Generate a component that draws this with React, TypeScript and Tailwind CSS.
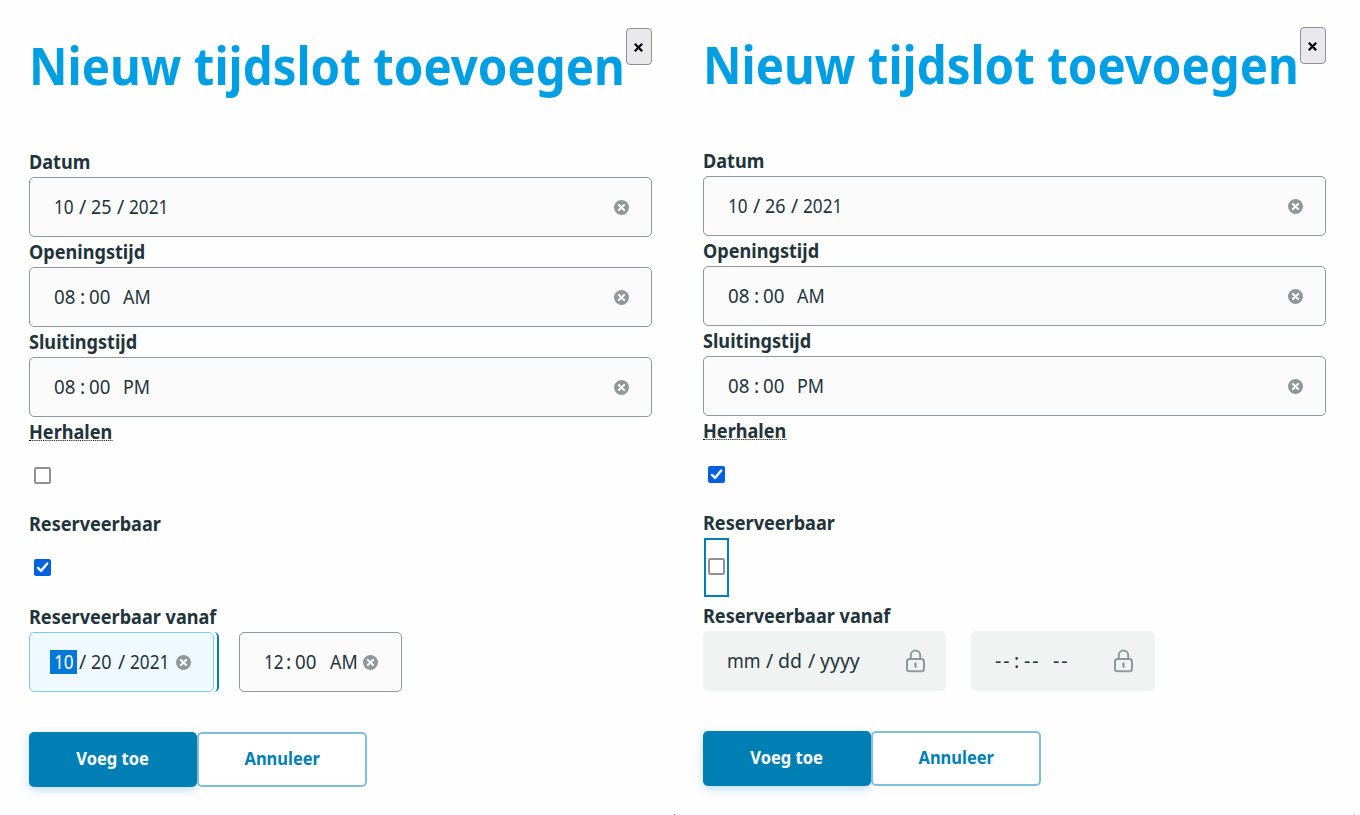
import React from "react";

type Segment = [text: string, width: string, shape?: string];

const NARROW = "inline-block origin-left scale-x-[0.88]";
const SLIM = "inline-block origin-left scale-x-[0.92]";
const EASED = "inline-block origin-left scale-x-[0.96]";

function ClearIcon() {
  return (
    <svg width="15" height="15" viewBox="0 0 15 15" className="shrink-0">
      <circle cx="7.5" cy="7.5" r="7.5" fill="#90989b" />
      <path d="M4.9 4.9l5.2 5.2M10.1 4.9l-5.2 5.2" stroke="#fbfbfb" strokeWidth="2.1" strokeLinecap="round" />
    </svg>
  );
}

function LockIcon() {
  return (
    <svg width="20" height="24" viewBox="0 0 20 24" fill="none" stroke="#90989b" strokeWidth="2" className="shrink-0">
      <rect x="1" y="10" width="17" height="12.3" rx="2.5" />
      <path d="M4.8 10V6.2a4.7 4.7 0 0 1 9.4 0V10" />
      <path d="M9.5 14.6v3" strokeWidth="2.4" strokeLinecap="round" />
    </svg>
  );
}

function Segments({ items }: { items: Segment[] }) {
  return (
    <div className="flex shrink-0 text-[19.5px] leading-6 whitespace-pre">
      {items.map(([text, width, shape], i) => (
        <span key={i} className={width}>
          <span className={shape}>{text}</span>
        </span>
      ))}
    </div>
  );
}

function Label({ dotted = false, children }: { dotted?: boolean; children: React.ReactNode }) {
  return (
    <div className="flex h-[30px] origin-left scale-x-[0.928] items-center text-[19.5px] leading-[18px] font-bold whitespace-nowrap">
      <span className={dotted ? "h-[18px] border-b border-dotted border-black" : "h-[18px]"}>{children}</span>
    </div>
  );
}

function Field({ items }: { items: Segment[] }) {
  return (
    <div className="flex h-[60px] items-center justify-between rounded-[5px] border border-[#90989b] bg-[#fbfbfb] pr-[22px] pl-6">
      <Segments items={items} />
      <ClearIcon />
    </div>
  );
}

function CheckRow({ checked, focused = false }: { checked: boolean; focused?: boolean }) {
  return (
    <div className="pl-px">
      <div
        className={
          focused
            ? "flex h-[59px] w-[25px] items-center justify-center border-2 border-[#007fb5] pb-0.5"
            : "flex h-[59px] w-[25px] items-center justify-center pb-0.5"
        }
      >
        {checked ? (
          <svg width="17" height="17" viewBox="0 0 17 17">
            <rect width="17" height="17" rx="2" fill="#0060df" />
            <path d="M4 8.9l3 3 6.2-7.4" fill="none" stroke="#fff" strokeWidth="2.4" strokeLinecap="round" strokeLinejoin="round" />
          </svg>
        ) : (
          <svg width="17" height="17" viewBox="0 0 17 17">
            <rect x="1" y="1" width="15" height="15" rx="1.2" fill="#fff" stroke="#8f8f9d" strokeWidth="2" />
          </svg>
        )}
      </div>
    </div>
  );
}

const dateSegments = (day: string): Segment[] => [
  ["10", "w-[25px]", NARROW],
  ["/", "w-3"],
  [day, "w-[26px]", SLIM],
  ["/", "w-3"],
  ["2021", "w-10", NARROW],
];

const timeSegments = (hour: string, half: string): Segment[] => [
  [hour, "w-[26px]", EASED],
  [":", "w-[9px]"],
  ["00", "w-[34px]", EASED],
  [half, "w-[27px]", SLIM],
];

function ActiveFrom() {
  return (
    <div className="flex gap-5">
      <div className="h-[60px] w-[190px] rounded-r-[5px] border-r-2 border-[#007fb5] pr-[3px]">
        <div className="flex h-[60px] items-center rounded-[5px] border border-[#80ccf0] bg-[#f0f9ff] pl-5">
          <div className="w-[27px] shrink-0 bg-[#0078d7] pl-1 text-white">
            <Segments items={[["10", "w-[23px]", NARROW]]} />
          </div>
          <Segments items={[[" ", "w-[2px]"], ["/", "w-3"], ["20", "w-[27px]", SLIM], ["/", "w-3"], ["2021", "w-[46px]", NARROW]]} />
          <ClearIcon />
        </div>
      </div>
      <div className="flex h-[60px] w-[163px] items-center rounded-[5px] border border-[#90989b] bg-[#fbfbfb] pl-6">
        <Segments items={[["12", "w-[22px]", NARROW], [":", "w-[9px]"], ["00", "w-[35px]", EASED], ["AM", "w-[33px]", SLIM]]} />
        <ClearIcon />
      </div>
    </div>
  );
}

function DisabledFrom() {
  return (
    <div className="flex gap-[25px]">
      <div className="flex h-[60px] w-[243px] items-center justify-between rounded-[5px] bg-[#f1f3f3] pr-5 pl-6">
        <Segments items={[["mm", "w-[39px]", SLIM], ["/", "w-3"], ["dd", "w-[30px]"], ["/", "w-3"], ["yyyy", "w-10"]]} />
        <LockIcon />
      </div>
      <div className="flex h-[60px] w-[184px] items-center justify-between rounded-[5px] bg-[#f1f3f3] pr-[21px] pl-6">
        <Segments
          items={[
            ["--", "w-[19px]", "tracking-[2px]"],
            [":", "w-[10px]"],
            ["--", "w-[29px]", "tracking-[2px]"],
            ["--", "w-4", "tracking-[2px]"],
          ]}
        />
        <LockIcon />
      </div>
    </div>
  );
}

function SlotDialog({ day, repeat }: { day: string; repeat: boolean }) {
  return (
    <section className="w-[623px] shrink-0 text-[#22333b]">
      <header className="flex h-[119px] items-start justify-between">
        <h1 className="w-[597px] shrink-0 origin-left scale-x-[0.912] pt-0.5 text-[52px] leading-[70px] font-bold whitespace-nowrap text-[#009ee3]">
          Nieuw tijdslot toevoegen
        </h1>
        <button className="flex h-[37px] w-[26px] shrink-0 items-center justify-center rounded-[4px] border border-[#8f8f9d] bg-[#e9e9ed] pr-px">
          <svg width="9" height="9" viewBox="0 0 9 9" stroke="#000" strokeWidth="2.2" className="mt-0.5">
            <path d="M.8.8l7.4 7.4M8.2.8L.8 8.2" />
          </svg>
        </button>
      </header>
      <Label>Datum</Label>
      <Field items={dateSegments(day)} />
      <Label>Openingstijd</Label>
      <Field items={timeSegments("08", "AM")} />
      <Label>Sluitingstijd</Label>
      <Field items={timeSegments("08", "PM")} />
      <Label dotted>Herhalen</Label>
      <div className="pb-[3px]">
        <CheckRow checked={repeat} />
      </div>
      <Label>Reserveerbaar</Label>
      <div className="pb-1">
        <CheckRow checked={!repeat} focused={repeat} />
      </div>
      <Label>Reserveerbaar vanaf</Label>
      {repeat ? <DisabledFrom /> : <ActiveFrom />}
      <div className="mt-10 flex h-[55px] text-[18px] font-bold">
        <button className="w-[168px] rounded-[5px] bg-[#007fb5] pb-0.5 text-white shadow-[0_3px_10px_rgba(0,127,181,0.25)]">
          <span className="inline-block scale-x-[0.915]">Voeg toe</span>
        </button>
        <button className="w-[170px] rounded-[5px] border-2 border-[#80bfda] bg-white pb-0.5 text-[#007fb5]">
          <span className="inline-block scale-x-[0.915]">Annuleer</span>
        </button>
      </div>
    </section>
  );
}

export default function App() {
  return (
    <main className="relative flex h-[815px] w-[1360px] gap-[51px] overflow-hidden bg-[#fefefe] pt-7 pl-[29px] font-['Noto_Sans',sans-serif]">
      <SlotDialog day="25" repeat={false} />
      <div className="-mt-px">
        <SlotDialog day="26" repeat />
      </div>
      <i className="absolute bottom-0 left-[674px] size-px bg-[#777777]" />
      <i className="absolute right-[5px] bottom-0 size-px bg-[#a8a8a8]" />
    </main>
  );
}
